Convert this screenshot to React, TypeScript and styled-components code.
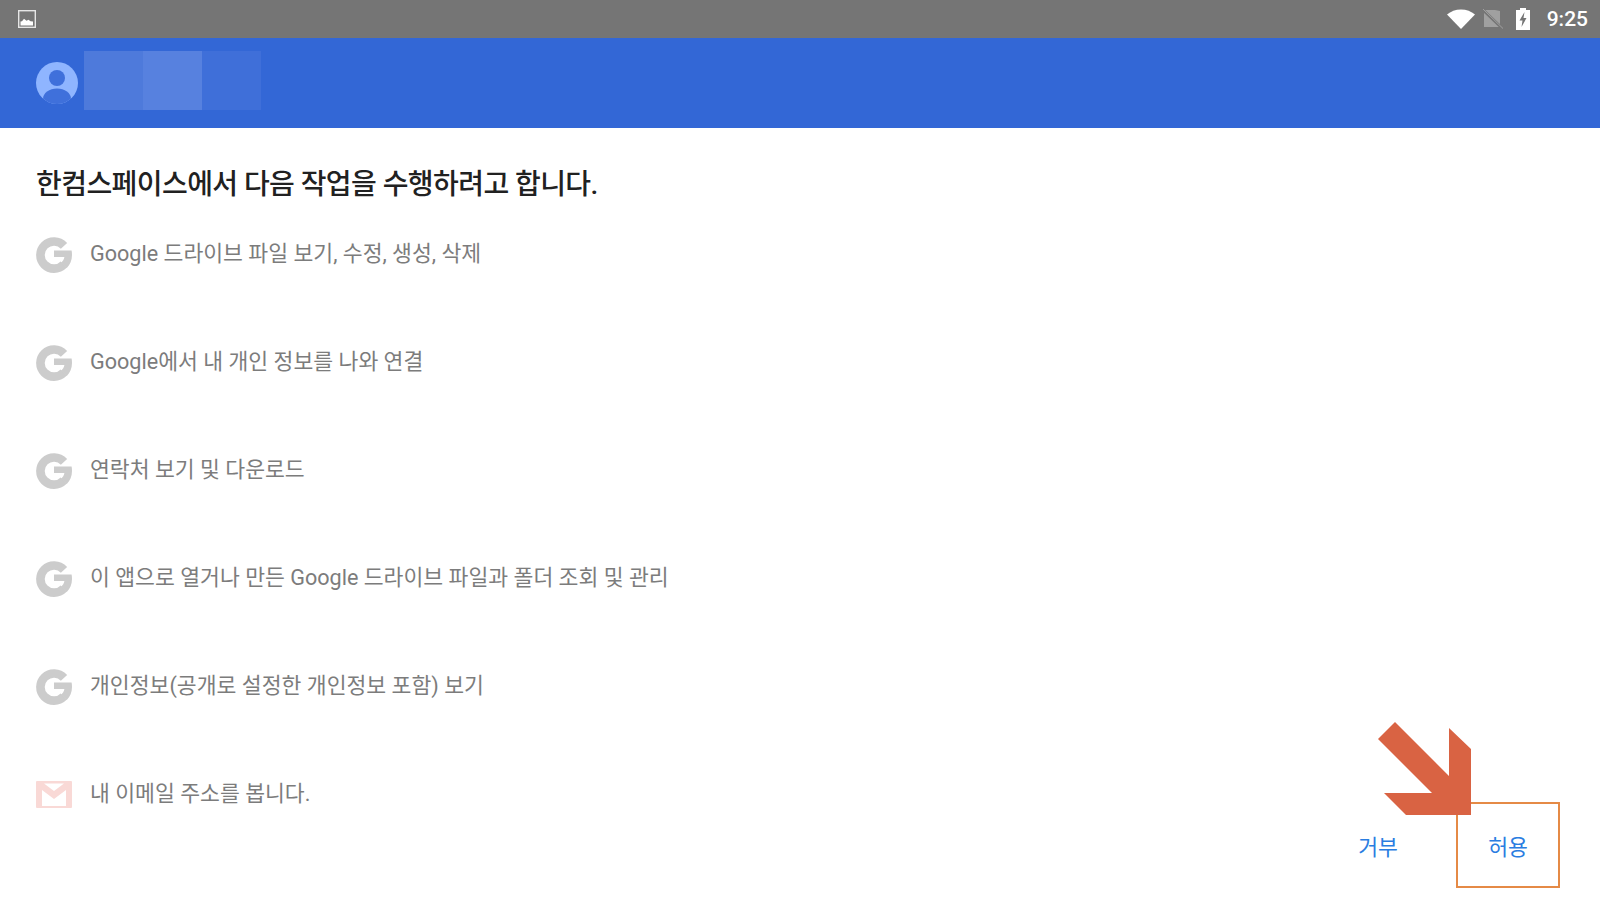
import styled, { createGlobalStyle } from "styled-components";

const GlobalStyle = createGlobalStyle`
  html, body {
    margin: 0;
    padding: 0;
    background: #fff;
  }
  body {
    font-family: Roboto, "Noto Sans CJK KR", sans-serif;
  }
`;

const scopes = [
  { icon: "google", text: "Google 드라이브 파일 보기, 수정, 생성, 삭제" },
  { icon: "google", text: "Google에서 내 개인 정보를 나와 연결" },
  { icon: "google", text: "연락처 보기 및 다운로드" },
  { icon: "google", text: "이 앱으로 열거나 만든 Google 드라이브 파일과 폴더 조회 및 관리" },
  { icon: "google", text: "개인정보(공개로 설정한 개인정보 포함) 보기" },
  { icon: "gmail", text: "내 이메일 주소를 봅니다." },
];

const GoogleIcon = () => (
  <svg width="36" height="36" viewBox="0 0 36 36">
    <path d="M28 8.800A13.600 13.600 0 1 0 27.800 27.500" fill="none" stroke="#cccccc" strokeWidth="8.600" />
    <path d="M18 13.500h17.600c.3 1.500.4 3 .4 4.500 0 5.200-1.900 9.700-5.200 13l-5.800-5.200c1.800-1.500 3-3.500 3.400-5.800H18z" fill="#cccccc" />
  </svg>
);

const GmailIcon = () => (
  <svg width="36" height="28" viewBox="0 0 36 28">
    <rect width="36" height="27" rx="1" fill="#f9d9d6" />
    <path d="M6 25V9l12 9 12-9v16z" fill="#fff" />
    <path d="M8 2.500h20L18 10z" fill="#fff" />
  </svg>
);

const App = () => {
  return (
    <Page>
      <GlobalStyle />
      <StatusBar>
        <svg width="20" height="20" viewBox="0 0 20 20">
          <rect x="1.700" y="1.700" width="16.600" height="16.600" fill="none" stroke="#e6e6e6" strokeWidth="1.400" />
          <path d="M3.500 16.500v-4l1.500-.2 2-2.500 2.500 2 2-1 2 1.500 2.500.2v4z" fill="#fff" />
        </svg>
        <StatusRight>
          <svg width="28" height="20" viewBox="0 0 28 20">
            <path d="M0 5.500C3.800 2.400 8.600.5 14 .5s10.200 1.900 14 5L14 20z" fill="#fff" />
          </svg>
          <SimIcon width="22" height="22" viewBox="0 0 22 22">
            <path d="M2 2h11l5 1v16H2z" fill="#a0a0a0" />
            <path d="M0 1l21 20" stroke="#757575" strokeWidth="3" />
            <path d="M1 1l20 19.500" stroke="#a0a0a0" strokeWidth="1" />
          </SimIcon>
          <svg width="14" height="22" viewBox="0 0 14 22">
            <path d="M4 0h6v2h4v20H0V2h4z" fill="#fff" />
            <path d="M8.500 4L3.500 12.500h3L5.500 19l5-9h-3z" fill="#757575" />
          </svg>
          <Clock>9:25</Clock>
        </StatusRight>
      </StatusBar>
      <Header>
        <svg width="42" height="42" viewBox="0 0 42 42">
          <defs>
            <clipPath id="avatar">
              <circle cx="21" cy="21" r="21" />
            </clipPath>
          </defs>
          <circle cx="21" cy="21" r="21" fill="#8fb5ff" />
          <circle cx="21" cy="16" r="8" fill="#3f70db" />
          <ellipse cx="21" cy="37" rx="14" ry="10.500" fill="#3f70db" clipPath="url(#avatar)" />
        </svg>
        <NameMask>
          <MaskCell $tone="#4e7adb" />
          <MaskCell $tone="#5781df" />
          <MaskCell $tone="#3f6fd9" />
        </NameMask>
      </Header>
      <Main>
        <Content>
          <Title>한컴스페이스에서 다음 작업을 수행하려고 합니다.</Title>
          <ScopeList>
            {scopes.map((scope) => (
              <ScopeRow key={scope.text}>
                <ScopeIcon>{scope.icon === "google" ? <GoogleIcon /> : <GmailIcon />}</ScopeIcon>
                <ScopeText>{scope.text}</ScopeText>
              </ScopeRow>
            ))}
          </ScopeList>
        </Content>
        <Actions>
          <DenyButton>거부</DenyButton>
          <AllowButton>
            허용
            <Arrow width="93" height="93" viewBox="0 0 93 93">
              <path d="M0 17L17 0l54 54V6l22 21v66H28L6 71h48z" fill="#d96343" />
            </Arrow>
          </AllowButton>
        </Actions>
      </Main>
    </Page>
  );
};

const Page = styled.div`
  width: 1600px;
  height: 900px;
  overflow: hidden;
  display: flex;
  flex-direction: column;
  background: #fff;
`;
const StatusBar = styled.div`
  height: 38px;
  padding: 0 12px 0 17px;
  display: flex;
  align-items: center;
  justify-content: space-between;
  background: #757575;
`;
const StatusRight = styled.div`
  display: flex;
  align-items: center;
  gap: 7px;
`;
const SimIcon = styled.svg`
  margin-right: 5px;
`;
const Clock = styled.span`
  margin-left: 10px;
  font-size: 21px;
  font-weight: 500;
  color: #fff;
`;
const Header = styled.div`
  height: 90px;
  padding-left: 36px;
  display: flex;
  align-items: center;
  gap: 6px;
  background: #3367d6;
`;
const NameMask = styled.div`
  display: flex;
  margin-top: -6px;
`;
const MaskCell = styled.div<{ $tone: string }>`
  width: 59px;
  height: 59px;
  background: ${(p) => p.$tone};
`;
const Main = styled.div`
  flex: 1;
  display: flex;
  justify-content: space-between;
`;
const Content = styled.div`
  padding: 38px 0 0 36px;
`;
const Title = styled.h1`
  margin: 0;
  font-size: 28px;
  line-height: 38px;
  font-weight: 500;
  letter-spacing: -0.57px;
  color: #212121;
`;
const ScopeList = styled.div`
  margin-top: 33px;
  display: flex;
  flex-direction: column;
`;
const ScopeRow = styled.div`
  height: 108px;
  display: flex;
  align-items: flex-start;
  gap: 18px;
`;
const ScopeIcon = styled.div`
  width: 36px;
  height: 36px;
  display: flex;
  align-items: center;
`;
const ScopeText = styled.div`
  padding-top: 2px;
  font-size: 21.6px;
  line-height: 30px;
  color: #7c7c7c;
`;
const Actions = styled.div`
  align-self: flex-end;
  display: flex;
  align-items: center;
  margin: 0 40px 12px 0;
`;
const DenyButton = styled.div`
  width: 102px;
  height: 84px;
  margin-right: 27px;
  box-sizing: border-box;
  display: flex;
  align-items: center;
  justify-content: center;
  font-size: 21.6px;
  color: #2a7de1;
`;
const AllowButton = styled(DenyButton)`
  position: relative;
  width: 104px;
  height: 86px;
  margin-right: 0;
  border: 2px solid #e58a46;
`;
const Arrow = styled.svg`
  position: absolute;
  left: -80px;
  top: -82px;
  overflow: visible;
`;

export default App;
